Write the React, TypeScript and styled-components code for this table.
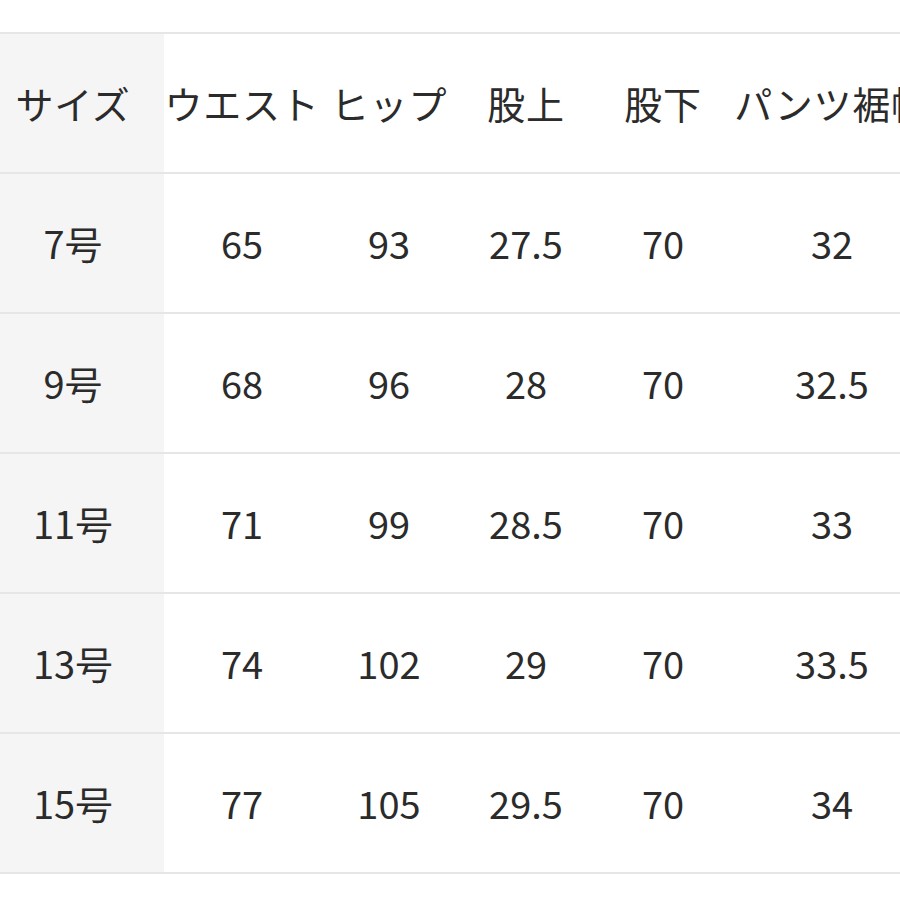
import React from 'react';
import styled, { createGlobalStyle } from 'styled-components';

const GlobalStyle = createGlobalStyle`
  html, body {
    margin: 0;
    padding: 0;
    background: #ffffff;
  }
  body {
    font-family: "Noto Sans CJK JP", "Noto Sans", sans-serif;
    color: #2b2b2b;
  }
`;

const Page = styled.div`
  width: 900px;
  height: 900px;
  overflow: hidden;
  padding-top: 32px;
  box-sizing: border-box;
`;

const Table = styled.div`
  width: 932px;
  border-bottom: 2px solid #e6e6e6;
`;

const Row = styled.div`
  display: grid;
  grid-template-columns: 164px 156px 138px 136px 138px 200px;
  height: 140px;
  box-sizing: border-box;
  border-top: 2px solid #e6e6e6;
`;

const Cell = styled.div<{ $head?: boolean }>`
  display: flex;
  align-items: center;
  justify-content: center;
  font-size: 38px;
  font-weight: 400;
  line-height: 1;
  white-space: nowrap;
  letter-spacing: ${(p) => (p.$head ? '0.02em' : '0')};
`;

const SizeCell = styled(Cell)`
  background: #f5f5f5;
  padding-right: 18px;
`;

const headers = ['ウエスト', 'ヒップ', '股上', '股下', 'パンツ裾幅'];

const rows: string[][] = [
  ['7号', '65', '93', '27.5', '70', '32'],
  ['9号', '68', '96', '28', '70', '32.5'],
  ['11号', '71', '99', '28.5', '70', '33'],
  ['13号', '74', '102', '29', '70', '33.5'],
  ['15号', '77', '105', '29.5', '70', '34'],
];

function App() {
  return (
    <>
      <GlobalStyle />
      <Page>
        <Table>
          <Row>
            <SizeCell $head>サイズ</SizeCell>
            {headers.map((h) => (
              <Cell $head key={h}>
                {h}
              </Cell>
            ))}
          </Row>
          {rows.map((r) => (
            <Row key={r[0]}>
              <SizeCell>{r[0]}</SizeCell>
              {r.slice(1).map((v, i) => (
                <Cell key={i}>{v}</Cell>
              ))}
            </Row>
          ))}
        </Table>
      </Page>
    </>
  );
}

export default App;
